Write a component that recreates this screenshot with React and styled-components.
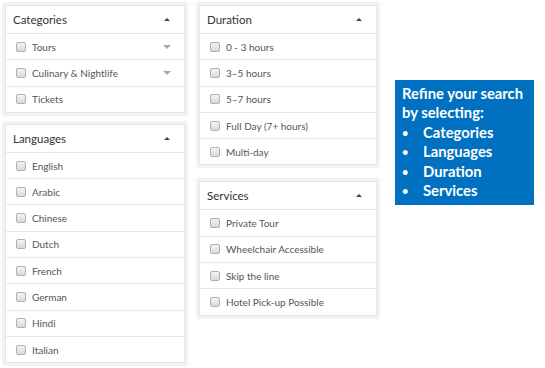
import styled, { createGlobalStyle } from "styled-components";

const GlobalStyle = createGlobalStyle`
  html, body {
    margin: 0;
    padding: 0;
    background: #fff;
    overflow: hidden;
  }
  body {
    font-family: Lato, "Open Sans", sans-serif;
  }
`;

const Page = styled.div`
  display: flex;
  align-items: flex-start;
  padding: 2px 0 0 2px;
  width: 545px;
  height: 368px;
  box-sizing: border-box;
`;

const Column = styled.div`
  display: flex;
  flex-direction: column;
  gap: ${(p) => p.gap}px;
  width: ${(p) => p.width}px;
  margin-left: ${(p) => p.offset || 0}px;
  flex-shrink: 0;
`;

const Frame = styled.div`
  border: 3px solid #f3f3f3;
  background: #fff;
`;

const Inner = styled.div`
  border: 1px solid #e6e6e6;
`;

const Header = styled.div`
  display: flex;
  align-items: center;
  justify-content: space-between;
  height: 27px;
  padding: 0 14px 0 7px;
  border-bottom: 1px solid #e6e6e6;
  font-size: 11.5px;
  color: #333;
`;

const Row = styled.div`
  display: flex;
  align-items: center;
  height: 25.3px;
  box-sizing: border-box;
  padding: 0 13px 0 10px;
  font-size: 10px;
  color: #555;
  & + & {
    border-top: 1px solid #e9e9e9;
    height: 26.3px;
  }
`;

const Box = styled.span`
  width: 8px;
  height: 8px;
  border: 1px solid #b0b0b0;
  border-radius: 2px;
  background: linear-gradient(#f4f4f4, #d9d9d9);
  margin-right: 6px;
  flex-shrink: 0;
`;

const Label = styled.span`
  flex: 1;
  white-space: nowrap;
`;

const Caret = styled.span`
  width: 0;
  height: 0;
  border-left: ${(p) => (p.down ? 4 : 3)}px solid transparent;
  border-right: ${(p) => (p.down ? 4 : 3)}px solid transparent;
  ${(p) =>
    p.down
      ? "border-top: 4px solid #a8a8a8;"
      : "border-bottom: 3px solid #444;"}
`;

const Note = styled.div`
  margin: 78px 0 0 15px;
  width: 139px;
  height: 125px;
  box-sizing: border-box;
  padding: 4px 4px 4px 7px;
  background: #0070c0;
  color: #fff;
  font-weight: 700;
  font-size: 14.8px;
  line-height: 19.4px;
  flex-shrink: 0;
  white-space: nowrap;
`;

const Bullets = styled.ul`
  margin: 0;
  padding: 0;
  list-style: none;
`;

const Bullet = styled.li`
  display: flex;
  &::before {
    content: "•";
    width: 21px;
    font-size: 11px;
  }
`;

const Panel = ({ title, items }) => (
  <Frame>
    <Inner>
      <Header>
        <span>{title}</span>
        <Caret />
      </Header>
      {items.map((it) => {
        const [label, sub] = Array.isArray(it) ? it : [it, false];
        return (
          <Row key={label}>
            <Box />
            <Label>{label}</Label>
            {sub && <Caret down />}
          </Row>
        );
      })}
    </Inner>
  </Frame>
);

export default function App() {
  return (
    <>
      <GlobalStyle />
      <Page>
        <Column width={186} gap={5}>
          <Panel
            title="Categories"
            items={[["Tours", true], ["Culinary & Nightlife", true], "Tickets"]}
          />
          <Panel
            title="Languages"
            items={[
              "English",
              "Arabic",
              "Chinese",
              "Dutch",
              "French",
              "German",
              "Hindi",
              "Italian",
            ]}
          />
        </Column>
        <Column width={184} gap={10} offset={8}>
          <Panel
            title="Duration"
            items={[
              "0 - 3 hours",
              "3–5 hours",
              "5–7 hours",
              "Full Day (7+ hours)",
              "Multi-day",
            ]}
          />
          <Panel
            title="Services"
            items={[
              "Private Tour",
              "Wheelchair Accessible",
              "Skip the line",
              "Hotel Pick-up Possible",
            ]}
          />
        </Column>
        <Note>
          Refine your search
          <br />
          by selecting:
          <Bullets>
            <Bullet>Categories</Bullet>
            <Bullet>Languages</Bullet>
            <Bullet>Duration</Bullet>
            <Bullet>Services</Bullet>
          </Bullets>
        </Note>
      </Page>
    </>
  );
}
